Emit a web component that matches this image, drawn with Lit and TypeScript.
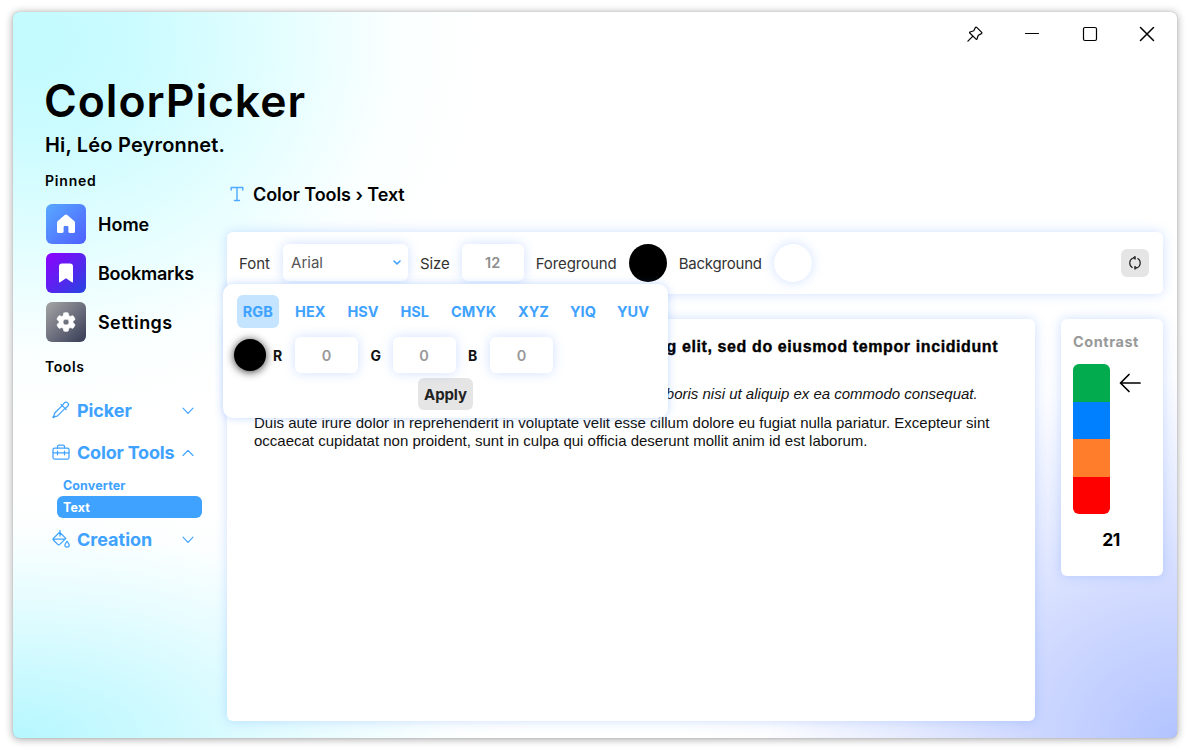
import { LitElement, html, css, svg } from "lit";
import { customElement } from "lit/decorators.js";
import { classMap } from "lit/directives/class-map.js";

const chevDown = html`<svg class="chev" width="12" height="8" viewBox="0 0 12 8"><path d="M1 1.2 6 6.3 11 1.2" /></svg>`;
const chevUp = html`<svg class="chev" width="12" height="8" viewBox="0 0 12 8"><path d="M1 6.5 6 1.4 11 6.5" /></svg>`;

const picker = svg`<path d="M10.2 4.6 3 11.8c-.6.6-.7 1-.8 2l-.1.7-1 1.300c-.3.5.2 1 .7.7l1.300-1 .7-.1c1-.1 1.400-.2 2-.8L13 7.400M9 3.400l5.200 5.200M10.200 4.600l2.100-2.700a2.300 2.300 0 0 1 3.400 3.300L13 7.400" />`;
const toolbox = svg`<rect x="1" y="5" width="16" height="11" rx="1.500"/><path d="M5.500 5V3.500A1.500 1.500 0 0 1 7 2h4a1.500 1.500 0 0 1 1.500 1.500V5M1 9.800h3.500M6.500 9.800h5M13.500 9.800H17M5.500 8v3.800M12.500 8v3.800"/>`;
const bucket = svg`<path d="M8 .5V6M7.600 2.200 13.800 8.400 7.800 14.400a1.500 1.500 0 0 1-2.100 0L1.600 10.200a1.500 1.500 0 0 1 0-2.100L7.600 2.200M1.400 9h12M15 11.300c1.200 1.500 2.200 2.600 2.200 3.700a2.100 2.100 0 0 1-4.300 0c0-1.100 1-2.200 2.100-3.700Z"/>`;

@customElement("app-root")
export class AppRoot extends LitElement {
  static styles = css`
    :host { display: block; height: 750px; overflow: hidden; background: #fff; font-family: Inter, sans-serif; color: #000; box-sizing: border-box; padding: 12px 11.500px 12px 13px; }
    * { box-sizing: border-box; }
    svg { display: block; flex: none; fill: none; stroke: currentColor; stroke-linecap: round; stroke-linejoin: round; }
    .window { height: 726px; border-radius: 6px; box-shadow: 0 0 1px 0 rgba(0,0,0,.25), 0 1px 9px rgba(0,0,0,.38);
      background:
        radial-gradient(ellipse 450px 385px at 20px 30px, #c2fbff 0%, rgba(198,251,255,.93) 22%, rgba(212,253,255,.68) 52%, rgba(236,254,255,.28) 80%, rgba(255,255,255,0) 100%),
        radial-gradient(ellipse 520px 250px at 0 100%, #b6f7ff 0%, rgba(198,249,255,.88) 28%, rgba(218,251,255,.62) 58%, rgba(240,254,255,.2) 84%, rgba(255,255,255,0) 100%),
        radial-gradient(ellipse 500px 440px at 100% 100%, #b2c3ff 0%, rgba(196,208,255,.9) 26%, rgba(222,229,255,.75) 55%, rgba(245,247,255,.3) 82%, rgba(255,255,255,0) 100%), #fff; }
    .caption { height: 44px; display: flex; justify-content: flex-end; align-items: center; gap: 41.300px; padding-right: 21.500px; }
    .caption svg { stroke-width: 1.2; }
    .body { display: grid; grid-template-columns: 214px 936px; height: 682px; }
    .side { padding-left: 32px; white-space: nowrap; }
    h1 { margin: 18px 0 0 -1px; font-size: 44.500px; line-height: 54px; font-weight: 600; letter-spacing: .95px; }
    .hi { font-size: 20px; line-height: 26px; font-weight: 600; margin: 4px 0 0; letter-spacing: .18px; }
    .cap { font-size: 14px; line-height: 18px; font-weight: 600; letter-spacing: .8px; }
    .pinned { margin-top: 14px; }
    .tools { margin-top: 16px; letter-spacing: .6px; }
    .pins { display: grid; gap: 9px; padding: 14px 0 0 1px; }
    .pin { display: flex; align-items: center; gap: 12px; height: 40px; font-size: 18px; font-weight: 600; }
    .p1 { letter-spacing: -.25px; }
    .p2 { letter-spacing: .4px; }
    .tile { width: 40px; height: 40px; border-radius: 6px; display: grid; place-items: center; color: #fff; }
    .tile svg { fill: #fff; stroke: none; }
    .t0 { background: linear-gradient(135deg, #58a9ff, #4e5eff); }
    .t1 { background: linear-gradient(135deg, #9000ff, #2545e0); }
    .t2 { background: linear-gradient(135deg, #a6a6a6, #363b56); }
    .grp { display: flex; align-items: center; height: 42px; width: 142px; margin-left: 7px; color: #40a2ff; font-size: 18px; font-weight: 700; }
    .grp svg { stroke-width: 1.25; margin-right: 7px; }
    .grp .chev { margin: 0 0 0 auto; stroke-width: 1.15; position: relative; top: 1px; }
    .grp.open { letter-spacing: -.2px; }
    .first { margin-top: 13px; letter-spacing: -.1px; }
    .sub { margin-left: 12px; width: 145px; height: 22px; padding-left: 6px; line-height: 23px; border-radius: 6px; font-size: 12.500px; font-weight: 700; color: #40a2ff; letter-spacing: .1px; }
    .grp.open + .sub { margin-top: 1px; }
    .sub.on { background: #40a2ff; color: #fff; }
    .crumb { display: flex; align-items: center; gap: 9px; height: 26px; margin-top: 125px; padding-left: 3px; font-size: 18px; font-weight: 600; letter-spacing: -.06px; }
    .crumb svg { color: #4da8ff; stroke-width: 1.4; }
    .card, .field, .popup { background: #fff; box-shadow: 0 0 12px rgba(64,128,255,.25); }
    .card { border-radius: 6px; }
    .bar { position: relative; display: flex; align-items: center; height: 62px; margin-top: 25px; padding: 0 14px 0 12px; font-size: 15px; color: #333; }
    .field { height: 37px; border-radius: 6px; display: flex; align-items: center; justify-content: center; color: #8d8d8d; font-weight: 600; font-size: 14.500px; }
    .bar > .field { margin-bottom: 1px; }
    .select { width: 125px; margin: 0 12px 0 13px; justify-content: space-between; padding: 0 7px 0 8px; color: #555; font-weight: 400; font-size: 15px; }
    .select svg { color: #40a2ff; stroke-width: 1.6; }
    .size { width: 62px; margin: 0 12px; }
    .l1 { letter-spacing: -.1px; }
    .l2 { letter-spacing: -.1px; }
    .l3 { letter-spacing: -.2px; }
    .dot { width: 38px; height: 38px; border-radius: 50%; margin: 0 12px; }
    .black { background: #000; }
    .white { background: #fff; box-shadow: 0 0 12px rgba(64,128,255,.25); }
    .btn { background: #e5e5e5; border-radius: 6px; display: grid; place-items: center; color: #222; }
    .reset { width: 28px; height: 28px; margin-left: auto; }
    .popup { position: absolute; z-index: 2; left: -4px; top: 52px; width: 445px; height: 134px; border-radius: 10px; padding: 11px 14px 8px; color: #111; font-weight: 700; box-shadow: 0 0 9px rgba(64,128,255,.3); }
    .tabs { display: flex; gap: 10px; margin-left: -.5px; }
    .tab { height: 33px; display: grid; place-items: center; padding: 0 6px; border-radius: 6px; color: #40a2ff; font-size: 14.500px; white-space: nowrap; }
    .tab.on { background: #c5e4ff; }
    .rgb { display: flex; align-items: center; height: 36px; margin: 9px 0 0 -3px; font-size: 14px; }
    .rgb .dot { width: 32px; height: 32px; margin: 0 7px 0 0; box-shadow: 0 1px 9px rgba(0,0,0,.8); }
    .rgb .field { width: 63px; height: 36px; margin: 0 12.500px 0 11px; font-size: 14.500px; color: #999; }
    .ch { width: 11px; }
    .apply { width: 55px; height: 32px; margin: 5px auto 0; font-size: 15px; letter-spacing: -.1px; }
    .row { display: flex; justify-content: space-between; align-items: flex-start; margin-top: 25px; }
    .doc { width: 808px; height: 402px; padding: 19px 27px; font: 15px/18px "Liberation Sans", Arial, sans-serif; color: #111; white-space: nowrap; }
    .doc p { margin: 0; }
    .doc .b { font-weight: 700; color: #000; font-size: 16px; letter-spacing: .6px; -webkit-text-stroke: .35px #000; }
    .doc .i { font-style: italic; margin-top: 11px; }
    .doc .n { margin-top: 11px; }
    .contrast { width: 102px; height: 257px; padding: 13px 12px; }
    .ct { font-size: 14.500px; line-height: 20px; font-weight: 700; color: #999; letter-spacing: .55px; }
    .meter { display: flex; gap: 9px; margin-top: 12px; }
    .scale { width: 37px; height: 150px; border-radius: 6px; overflow: hidden; display: grid; grid-template-rows: repeat(4, 1fr); }
    .s0 { background: #02ab4d; } .s1 { background: #007fff; } .s2 { background: #ff7d2b; } .s3 { background: #f00; }
    .meter svg { margin-top: 9px; stroke-width: 1.700; }
    .val { text-align: center; font-size: 17.500px; line-height: 24px; font-weight: 700; margin-top: 14px; letter-spacing: -.5px; padding-right: 2px; }
  `;

  private tab(name: string, w: number) {
    return html`<div class=${classMap({ tab: true, on: name === "RGB" })} style="width:${w}px">${name}</div>`;
  }
  private tool(icon: unknown, name: string, open: boolean, first = false) {
    return html`<div class=${classMap({ grp: true, first, open })}><svg width="18" height="18" viewBox="0 0 18 18">${icon}</svg><span>${name}</span>${open ? chevUp : chevDown}</div>`;
  }

  render() {
    return html`<div class="window">
      <div class="caption">
        <svg width="16" height="16" viewBox="0 0 16 16"><path d="m9.700 1.300 5 5c.4.500.3 1-.2 1.300l-3.200 1.600-1.300 3.800c-.2.500-.6.600-1 .2L2.800 7c-.4-.4-.3-.8.2-1l3.800-1.300 1.600-3.200c.3-.5.9-.6 1.300-.2ZM5.900 10.100.9 15.100"/></svg>
        <svg width="16" height="16" viewBox="0 0 16 16"><path d="M1.500 7.500h13"/></svg>
        <svg width="16" height="16" viewBox="0 0 16 16"><rect x="1.500" y="1.500" width="13" height="13" rx="1.500"/></svg>
        <svg width="16" height="16" viewBox="0 0 16 16"><path stroke-width="1.500" d="m1.500 1.500 13 13M14.500 1.500l-13 13"/></svg>
      </div>
      <div class="body">
        <nav class="side">
          <h1>ColorPicker</h1>
          <div class="hi">Hi, Léo Peyronnet.</div>
          <div class="cap pinned">Pinned</div>
          <div class="pins">
            <div class="pin"><div class="tile t0"><svg width="20" height="20" viewBox="0 0 20 20"><path d="M8.700 1.100a2 2 0 0 1 2.600 0l6.900 5.800c.5.400.8 1 .8 1.600v9A1.600 1.600 0 0 1 17.400 19H14a1.600 1.600 0 0 1-1.600-1.600V13a1 1 0 0 0-1-1H8.600a1 1 0 0 0-1 1v4.400A1.600 1.600 0 0 1 6 19H2.600A1.600 1.600 0 0 1 1 17.400V8.500c0-.6.300-1.200.8-1.600l6.900-5.800Z"/></svg></div><span class="p0">Home</span></div>
            <div class="pin"><div class="tile t1"><svg width="20" height="20" viewBox="0 0 20 20"><path d="M3 3.500A3 3 0 0 1 6 .5h8a3 3 0 0 1 3 3v15.200c0 .7-.6 1-1.100.6L10 15.200l-5.900 4.100c-.5.400-1.100.1-1.100-.6V3.500Z"/></svg></div><span class="p1">Bookmarks</span></div>
            <div class="pin"><div class="tile t2"><svg width="20" height="20" viewBox="0 0 20 20"><path style="stroke:#fff;stroke-width:.6" fill-rule="evenodd" d="M7.800.9Q10 .2 12.200.9L12.800 3.600 14.200 4.400 16.800 3.600Q18.500 5.200 19.100 7.400L17 9.300V10.700L19.100 12.600Q18.500 14.900 16.800 16.400L14.200 15.600 12.800 16.400 12.200 19.100Q10 19.800 7.800 19.100L7.200 16.400 5.800 15.600 3.200 16.400Q1.500 14.900.9 12.600L3 10.700V9.300L.9 7.400Q1.500 5.200 3.200 3.600L5.800 4.400 7.200 3.600ZM10 7a3 3 0 1 0 0 6 3 3 0 0 0 0-6Z"/></svg></div><span class="p2">Settings</span></div>
          </div>
          <div class="cap tools">Tools</div>
          ${this.tool(picker, "Picker", false, true)}
          ${this.tool(toolbox, "Color Tools", true)}
          <div class="sub">Converter</div>
          <div class="sub on">Text</div>
          ${this.tool(bucket, "Creation", false)}
        </nav>
        <main>
          <div class="crumb"><svg width="14" height="16" viewBox="0 0 14 16"><path d="M1.200 4V1.500h11.600V4M7 1.500v13M4.500 14.500h5"/></svg><span>Color Tools › Text</span></div>
          <section class="card bar">
            <span class="l0">Font</span>
            <div class="field select"><span>Arial</span><svg width="8" height="6" viewBox="0 0 8 6"><path d="m1 1 3 3 3-3"/></svg></div>
            <span class="l1">Size</span><div class="field size">12</div>
            <span class="l2">Foreground</span><div class="dot black"></div>
            <span class="l3">Background</span><div class="dot white"></div>
            <div class="btn reset"><svg width="14" height="14" viewBox="0 0 14 14"><path stroke-width="1.200" d="M4.700 2.300A5.200 5.200 0 0 0 4.200 11.400M9.300 11.700a5.200 5.200 0 0 0 .5-9.100"/><path fill="currentColor" d="M7.200.700v2.600L5.400 2ZM6.800 10.700v2.600L8.600 12Z"/></svg></div>
            <div class="popup">
              <div class="tabs">${this.tab("RGB", 43)}${this.tab("HEX", 43)}${this.tab("HSV", 43)}${this.tab("HSL", 41)}${this.tab("CMYK", 57)}${this.tab("XYZ", 42)}${this.tab("YIQ", 37)}${this.tab("YUV", 43)}</div>
              <div class="rgb"><div class="dot black"></div><span class="ch">R</span><div class="field">0</div><span class="ch">G</span><div class="field">0</div><span class="ch">B</span><div class="field">0</div></div>
              <div class="btn apply">Apply</div>
            </div>
          </section>
          <div class="row">
            <article class="card doc">
              <p class="b">Lorem ipsum dolor sit amet, consectetur adipiscing elit, sed do eiusmod tempor incididunt<br>ut labore et dolore magna aliqua.</p>
              <p class="i">Ut enim ad minim veniam, quis nostrud exercitation ullamco laboris nisi ut aliquip ex ea commodo consequat.</p>
              <p class="n">Duis aute irure dolor in reprehenderit in voluptate velit esse cillum dolore eu fugiat nulla pariatur. Excepteur sint<br>occaecat cupidatat non proident, sunt in culpa qui officia deserunt mollit anim id est laborum.</p>
            </article>
            <aside class="card contrast">
              <div class="ct">Contrast</div>
              <div class="meter"><div class="scale"><div class="s0"></div><div class="s1"></div><div class="s2"></div><div class="s3"></div></div>
              <svg width="22" height="20" viewBox="0 0 22 20"><path d="M21 10H1.500M10 1.500 1.500 10l8.500 8.500"/></svg></div>
              <div class="val">21</div>
            </aside>
          </div>
        </main>
      </div>
    </div>`;
  }
}
